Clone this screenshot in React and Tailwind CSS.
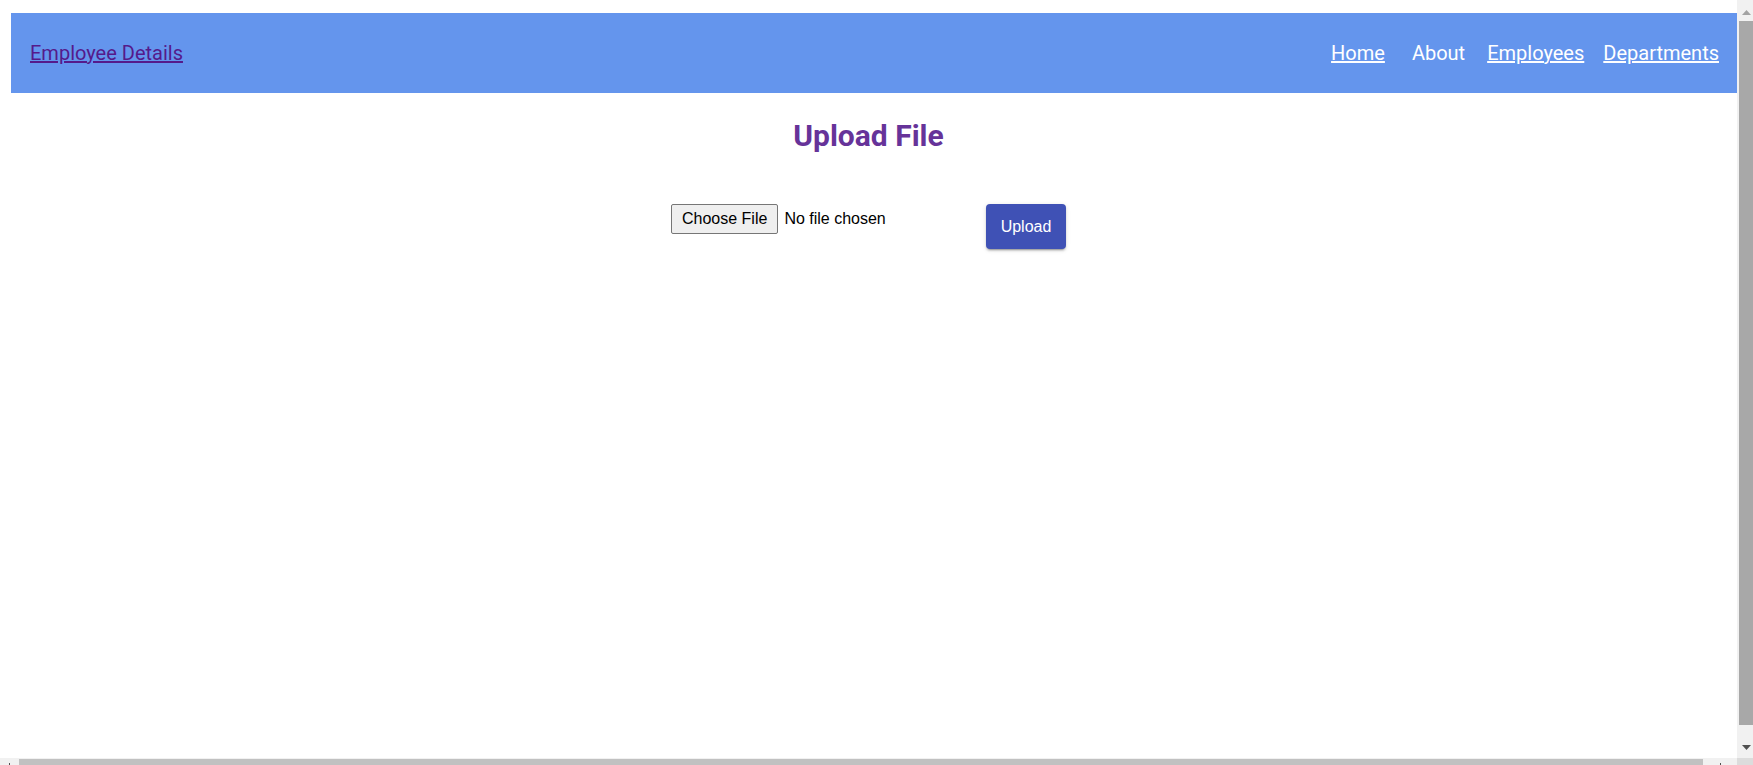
import React from 'react';

const links = [
  { label: 'Home', underline: true, gap: 'mr-[27px]' },
  { label: 'About', underline: false, gap: 'mr-[22px]' },
  { label: 'Employees', underline: true, gap: 'mr-[19px]' },
  { label: 'Departments', underline: true, gap: '' },
];

function Arrow({ dir, color }) {
  const points = dir === 'up' ? '0,5 4.5,0 9,5' : '0,0 4.5,5 9,0';
  return (
    <svg width="9" height="5" viewBox="0 0 9 5">
      <polygon points={points} fill={color} />
    </svg>
  );
}

function Navbar() {
  return (
    <nav className="ml-[11px] mt-[13px] h-[80px] bg-[#6495ed] flex items-center justify-between pl-[19px] pr-[18px] font-['Roboto',sans-serif] text-[20px]">
      <a href="#" className="text-[#551a8b] underline">
        Employee Details
      </a>
      <div className="flex items-center text-white">
        {links.map((l) => (
          <a key={l.label} href="#" className={`${l.gap} ${l.underline ? 'underline' : 'no-underline'}`}>
            {l.label}
          </a>
        ))}
      </div>
    </nav>
  );
}

function UploadPanel() {
  return (
    <main className="flex flex-col items-center">
      <h1 className="mt-[25px] leading-[35px] text-[30px] font-bold text-[#663399] font-['Roboto',sans-serif]">
        Upload File
      </h1>
      <div className="mt-[51px] flex items-start font-['Liberation_Sans',Arial,sans-serif] text-[16px]">
        <input
          type="file"
          className="w-[315px] text-black file:mr-[6px] file:border file:border-solid file:border-[#767676] file:bg-[#efefef] file:rounded-[2px] file:px-[10px] file:py-[2px] file:text-black"
        />
        <button className="h-[45px] w-[80px] rounded-[4px] bg-[#3f51b5] text-white text-[16px] shadow-[0_3px_1px_-2px_rgba(0,0,0,0.2),0_2px_2px_0_rgba(0,0,0,0.14),0_1px_5px_0_rgba(0,0,0,0.12)]">
          Upload
        </button>
      </div>
    </main>
  );
}

export default function App() {
  return (
    <div className="h-[765px] w-full overflow-hidden bg-white flex flex-col">
      <div className="flex flex-1 min-h-0">
        <div className="flex-1 min-w-0">
          <Navbar />
          <UploadPanel />
        </div>
        {/* vertical scrollbar */}
        <div className="w-[16px] bg-[#f1f1f1] flex flex-col">
          <div className="h-[21px] flex justify-center pt-[10px] pl-[3px]">
            <Arrow dir="up" color="#a3a3a3" />
          </div>
          <div className="h-[704px] ml-[2px] bg-[#a8a8a8]" />
          <div className="flex-1 flex justify-center pt-[20px] pl-[3px]">
            <Arrow dir="down" color="#505050" />
          </div>
        </div>
      </div>
      {/* horizontal scrollbar */}
      <div className="h-[7px] flex bg-[#f1f1f1]">
        <div className="w-[19px] flex justify-center">
          <div className="w-[1px] h-[2px] mt-[5px] bg-[#505050]" />
        </div>
        <div className="w-[1684px] mt-[1px] bg-[#c1c1c1]" />
        <div className="w-[34px] flex justify-center">
          <div className="w-[1px] h-[2px] mt-[5px] bg-[#505050]" />
        </div>
        <div className="flex-1 bg-[#dcdcdc]" />
      </div>
    </div>
  );
}
